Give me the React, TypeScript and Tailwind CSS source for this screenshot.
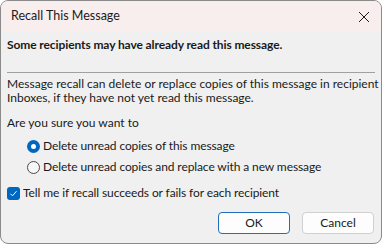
const font = { fontFamily: 'Lato, "Liberation Sans", sans-serif' };

function Radio({ checked }: { checked?: boolean }) {
  return checked ? (
    <span className="w-[13px] h-[13px] rounded-full bg-[#0067c0] flex items-center justify-center shrink-0">
      <span className="w-[5px] h-[5px] rounded-full bg-white" />
    </span>
  ) : (
    <span className="w-[13px] h-[13px] rounded-full border border-[#4a4a4a] bg-[#f7f7f7] shrink-0" />
  );
}

export default function App() {
  return (
    <div
      className="w-[382px] h-[244px] bg-[#f0f0f0] border border-[#8a8a8a] rounded-[8px] overflow-hidden flex flex-col text-[12px] text-[#1a1a1a] whitespace-nowrap"
      style={font}
    >
      <div className="h-[31px] bg-[#f8eeee] flex items-center justify-between pl-[10px] pr-[11px] shrink-0">
        <span className="text-[12.5px] text-[#1b1b1b]">Recall This Message</span>
        <svg width="12" height="12" viewBox="0 0 12 12">
          <path d="M1 1L11 11M11 1L1 11" stroke="#1b1b1b" strokeWidth="1" />
        </svg>
      </div>
      <div className="flex flex-col px-[6px] pt-[5px]">
        <div className="font-bold leading-[15px] tracking-[-0.1px]">
          Some recipients may have already read this message.
        </div>
        <div className="h-px bg-[#a0a0a0] mt-[20px]" />
        <div className="mt-[4px] leading-[14px]">
          <div>Message recall can delete or replace copies of this message in recipient</div>
          <div>Inboxes, if they have not yet read this message.</div>
        </div>
        <div className="mt-[11px] leading-[14px]">Are you sure you want to</div>
        <div className="flex flex-col gap-[7px] pl-[20px] mt-[9px]">
          <label className="flex items-center gap-[3px] h-[14px] tracking-[-0.1px]">
            <Radio checked />
            Delete unread copies of this message
          </label>
          <label className="flex items-center gap-[3px] h-[14px] tracking-[-0.1px]">
            <Radio />
            Delete unread copies and replace with a new message
          </label>
        </div>
        <label className="flex items-center gap-[3px] mt-[12px] h-[14px] tracking-[-0.1px]">
          <span className="w-[13px] h-[13px] rounded-[3px] bg-[#0067c0] flex items-center justify-center shrink-0">
            <svg width="9" height="9" viewBox="0 0 9 9">
              <path d="M1.5 4.8L3.5 6.8L7.5 2.2" stroke="white" strokeWidth="1" fill="none" />
            </svg>
          </span>
          Tell me if recall succeeds or fails for each recipient
        </label>
        <div className="flex justify-end gap-[12px] mt-[12px] pr-[1px]">
          <button className="w-[72px] h-[22px] rounded-[4px] bg-[#fdfdfd] border border-[#1f6eb8]">OK</button>
          <button className="w-[72px] h-[22px] rounded-[4px] bg-[#fdfdfd] border border-[#d0d0d0]">Cancel</button>
        </div>
      </div>
    </div>
  );
}
